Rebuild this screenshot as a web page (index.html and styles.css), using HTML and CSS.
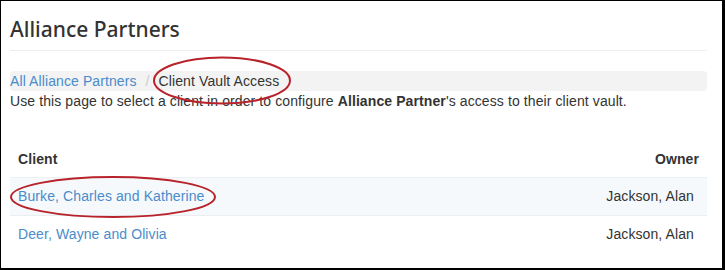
FILE: index.html
```html
<!DOCTYPE html>
<html lang="en">
<head>
    <meta charset="UTF-8">
    <title>Alliance Partners</title>
    <link rel="stylesheet" href="styles.css">
</head>
<body>
    <div class="frame">
        <h1 class="page-title">Alliance Partners</h1>
        <hr class="divider">

        <ol class="breadcrumb">
            <li><a href="#">All Alliance Partners</a></li>
            <li class="active">Client Vault Access</li>
        </ol>
        <p class="intro">Use this page to select a client in order to configure <b>Alliance Partner</b>'s access to their client vault.</p>

        <table class="clients">
            <thead>
                <tr>
                    <th>Client</th>
                    <th class="owner">Owner</th>
                </tr>
            </thead>
            <tbody>
                <tr class="hover">
                    <td><a href="#">Burke, Charles and Katherine</a></td>
                    <td class="owner">Jackson, Alan</td>
                </tr>
                <tr>
                    <td><a href="#">Deer, Wayne and Olivia</a></td>
                    <td class="owner">Jackson, Alan</td>
                </tr>
            </tbody>
        </table>

        <!-- red marker annotations -->
        <svg class="marks" width="725" height="270" viewBox="0 0 725 270">
            <ellipse cx="222" cy="80.5" rx="68" ry="23" />
            <ellipse cx="113" cy="197" rx="102" ry="20" />
        </svg>
    </div>
</body>
</html>
```

FILE: styles.css
```css
* {
    box-sizing: border-box;
}

body {
    margin: 0;
    font-family: "Liberation Sans", Arial, sans-serif;
    font-size: 14px;
    letter-spacing: 0.1px;
    color: #333;
    background: #fff;
}

.frame {
    position: relative;
    width: 725px;
    height: 270px;
    border-style: solid;
    border-color: #000;
    border-width: 1px 3px 2px 1px;
    padding: 0 15px 0 9px;
    overflow: hidden;
}

.page-title {
    font-family: "Noto Sans", sans-serif;
    font-weight: 500;
    font-size: 21px;
    line-height: 30px;
    letter-spacing: 0;
    margin: 13px 0 0 0;
    color: #333;
}

.divider {
    border: 0;
    border-top: 1px solid #eee;
    margin: 6px 0 0 0;
}

.breadcrumb {
    list-style: none;
    margin: 20px 0 0 0;
    padding: 0;
    height: 20px;
    line-height: 20px;
    background: #f3f3f3;
    border-radius: 4px;
}

.breadcrumb li {
    display: inline-block;
}

.breadcrumb li + li:before {
    content: "/\00a0";
    padding: 0 5px;
    color: #ccc;
}

a {
    color: #4a8ccb;
    text-decoration: none;
}

.intro {
    margin: 0;
    line-height: 20px;
}

.intro b {
    font-weight: bold;
}

.clients {
    width: 100%;
    border-collapse: collapse;
    margin-top: 30px;
}

.clients th,
.clients td {
    padding: 8px;
    line-height: 20px;
    text-align: left;
}

.clients th {
    border-bottom: 1px solid #eef1f4;
    font-weight: bold;
}

.clients td {
    border-top: 1px solid #e9eef2;
    padding-bottom: 9px;
}

.clients .owner {
    text-align: right;
}

.clients td.owner {
    padding-right: 13px;
}

.clients tr.hover td {
    background: #f5f9fc;
}

.marks {
    position: absolute;
    left: -1px;
    top: -1px;
    pointer-events: none;
}

.marks ellipse {
    fill: none;
    stroke: #b8232b;
    stroke-width: 2;
}
```
